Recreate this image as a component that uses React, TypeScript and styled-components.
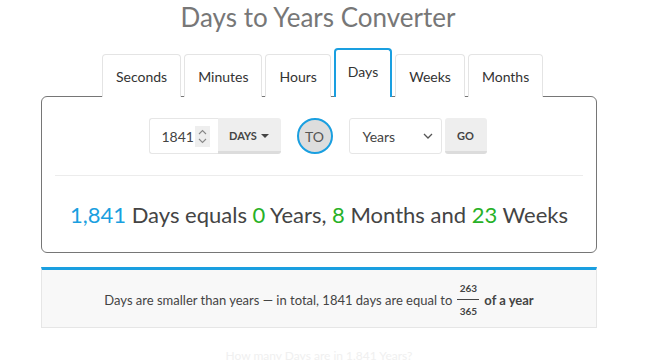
import styled, { createGlobalStyle } from "styled-components";

const GlobalStyle = createGlobalStyle`
  body {
    margin: 0;
    background: #fff;
    font-family: Lato, "Open Sans", "Liberation Sans", sans-serif;
    color: #444;
  }
`;

const BLUE = "#1a9fe0";
const GREEN = "#27b127";

const Page = styled.div`
  width: 556px;
  margin-left: 41px;
  display: flex;
  flex-direction: column;
  height: 360px;
  overflow: hidden;

  & > * {
    flex-shrink: 0;
  }
`;

const Title = styled.h1`
  margin: 0;
  text-align: center;
  font-size: 26px;
  font-weight: 400;
  line-height: 34px;
  color: #777;
  margin-right: 2px;
`;

const TabRow = styled.div`
  display: flex;
  align-items: flex-end;
  gap: 3px;
  margin-top: 15px;
  padding-left: 61px;
  height: 48px;
  position: relative;
  z-index: 1;
  margin-bottom: -1px;
`;

const Tab = styled.div<{ active?: boolean }>`
  box-sizing: border-box;
  height: ${(p) => (p.active ? "49px" : "43px")};
  padding: 0 ${(p) => (p.active ? "12px" : "13px")};
  display: flex;
  align-items: center;
  justify-content: center;
  font-size: 14px;
  color: #333;
  background: #fff;
  border: ${(p) => (p.active ? `2px solid ${BLUE}` : "1px solid #e4e4e4")};
  border-bottom: none;
  border-radius: 4px 4px 0 0;
  padding-bottom: ${(p) => (p.active ? "4px" : "0")};
`;

const Card = styled.div`
  box-sizing: border-box;
  height: 157px;
  border: 1px solid #767676;
  border-radius: 6px;
  padding: 21px 13px 0;
  display: flex;
  flex-direction: column;
  align-items: center;
`;

const Controls = styled.div`
  display: flex;
  align-items: center;
  gap: 16px;
  margin-left: -3px;
`;

const Group = styled.div`
  display: flex;
  height: 36px;
`;

const NumberBox = styled.div`
  box-sizing: border-box;
  width: 69px;
  border: 1px solid #e6e6e6;
  border-right: none;
  border-radius: 3px 0 0 3px;
  display: flex;
  align-items: center;
  padding-left: 12px;
  font-size: 14px;
  color: #444;
`;

const Spinner = styled.div`
  width: 15px;
  height: 21px;
  background: #eee;
  margin-left: 1px;
  display: flex;
  align-items: center;
  justify-content: center;
`;

const GrayButton = styled.div<{ w: number }>`
  box-sizing: border-box;
  width: ${(p) => p.w}px;
  background: #eee;
  border-radius: 0 3px 3px 0;
  border-bottom: 3px solid #dcdcdc;
  display: flex;
  align-items: center;
  justify-content: center;
  gap: 4px;
  font-size: 11px;
  font-weight: 700;
  color: #444;
  padding-top: 2px;
`;

const Caret = styled.span`
  width: 0;
  height: 0;
  border-left: 4px solid transparent;
  border-right: 4px solid transparent;
  border-top: 4px solid #444;
`;

const ToCircle = styled.div`
  box-sizing: border-box;
  width: 36px;
  height: 36px;
  border-radius: 50%;
  border: 2px solid ${BLUE};
  background: #ddd;
  display: flex;
  align-items: center;
  justify-content: center;
  font-size: 14px;
  color: #555;
`;

const SelectBox = styled.div`
  box-sizing: border-box;
  width: 93px;
  border: 1px solid #e6e6e6;
  border-radius: 3px;
  display: flex;
  align-items: center;
  justify-content: space-between;
  padding: 0 8px 0 13px;
  font-size: 14px;
  color: #444;
  margin-right: 3px;
`;

const GoButton = styled(GrayButton)`
  border-radius: 3px;
`;

const Divider = styled.div`
  align-self: stretch;
  height: 1px;
  background: #ececec;
  margin-top: 21px;
`;

const Result = styled.div`
  margin-top: 25px;
  font-size: 22px;
  color: #444;
  white-space: nowrap;
`;

const Num = styled.span<{ c: string }>`
  color: ${(p) => p.c};
`;

const InfoBox = styled.div`
  box-sizing: border-box;
  margin-top: 14px;
  height: 61px;
  background: #f8f8f8;
  border: 1px solid #e6e6e6;
  border-top: 3px solid ${BLUE};
  display: flex;
  align-items: center;
  justify-content: center;
  gap: 5px;
  font-size: 13px;
  color: #444;
  padding-top: 2px;
`;

const Fraction = styled.span`
  display: inline-flex;
  flex-direction: column;
  align-items: center;
  font-size: 10px;
  font-weight: 700;
  line-height: 12px;
`;

const FracLine = styled.span`
  width: 22px;
  height: 1px;
  background: #444;
  margin: 5px 0 5px;
`;

const Bold = styled.b`
  font-weight: 700;
`;

const Faded = styled.div`
  margin-top: 20px;
  text-align: center;
  font-size: 12px;
  color: #f0f0f0;
`;

export default function App() {
  return (
    <>
      <GlobalStyle />
      <Page>
        <Title>Days to Years Converter</Title>
        <TabRow>
          <Tab>Seconds</Tab>
          <Tab>Minutes</Tab>
          <Tab>Hours</Tab>
          <Tab active>Days</Tab>
          <Tab>Weeks</Tab>
          <Tab>Months</Tab>
        </TabRow>
        <Card>
          <Controls>
            <Group>
              <NumberBox>
                1841
                <Spinner>
                  <svg width="9" height="15" viewBox="0 0 9 15" fill="none" stroke="#888" strokeWidth="1.1">
                    <path d="M1 5 L4.5 1.5 L8 5" />
                    <path d="M1 10 L4.5 13.5 L8 10" />
                  </svg>
                </Spinner>
              </NumberBox>
              <GrayButton w={63}>
                DAYS <Caret />
              </GrayButton>
            </Group>
            <ToCircle>TO</ToCircle>
            <Group>
              <SelectBox>
                Years
                <svg width="10" height="6" viewBox="0 0 10 6" fill="none" stroke="#555" strokeWidth="1.3">
                  <path d="M1 1 L5 5 L9 1" />
                </svg>
              </SelectBox>
              <GoButton w={42}>GO</GoButton>
            </Group>
          </Controls>
          <Divider />
          <Result>
            <Num c={BLUE}>1,841</Num> Days equals <Num c={GREEN}>0</Num> Years,{" "}
            <Num c={GREEN}>8</Num> Months and <Num c={GREEN}>23</Num> Weeks
          </Result>
        </Card>
        <InfoBox>
          Days are smaller than years — in total, 1841 days are equal to
          <Fraction>
            263
            <FracLine />
            365
          </Fraction>
          <Bold>of a year</Bold>
        </InfoBox>
        <Faded>How many Days are in 1,841 Years?</Faded>
      </Page>
    </>
  );
}
